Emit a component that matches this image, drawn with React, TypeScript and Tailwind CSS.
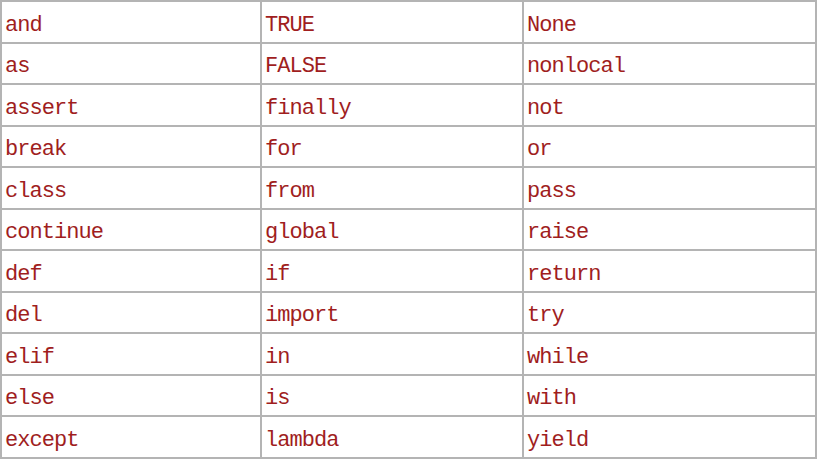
import React from "react";

const rows: [string, string, string][] = [
  ["and", "TRUE", "None"],
  ["as", "FALSE", "nonlocal"],
  ["assert", "finally", "not"],
  ["break", "for", "or"],
  ["class", "from", "pass"],
  ["continue", "global", "raise"],
  ["def", "if", "return"],
  ["del", "import", "try"],
  ["elif", "in", "while"],
  ["else", "is", "with"],
  ["except", "lambda", "yield"],
];

export default function App() {
  return (
    <div className="w-[817px] h-[459px] bg-white overflow-hidden">
      <table
        className="table-fixed border-collapse w-[815px] text-[#a01e1e] text-[22px] tracking-[-0.95px]"
        style={{ fontFamily: '"Liberation Mono", "DejaVu Sans Mono", monospace' }}
      >
        <colgroup>
          <col className="w-[260px]" />
          <col className="w-[262px]" />
          <col className="w-[293px]" />
        </colgroup>
        <tbody>
          {rows.map((r, i) => (
            <tr key={i} className="h-[41.5px]">
              {r.map((c, j) => (
                <td
                  key={j}
                  className="border-2 border-[#b4b4b4] pl-[3px] pt-[8px] pb-0 align-middle leading-none font-normal"
                >
                  {c}
                </td>
              ))}
            </tr>
          ))}
        </tbody>
      </table>
    </div>
  );
}
